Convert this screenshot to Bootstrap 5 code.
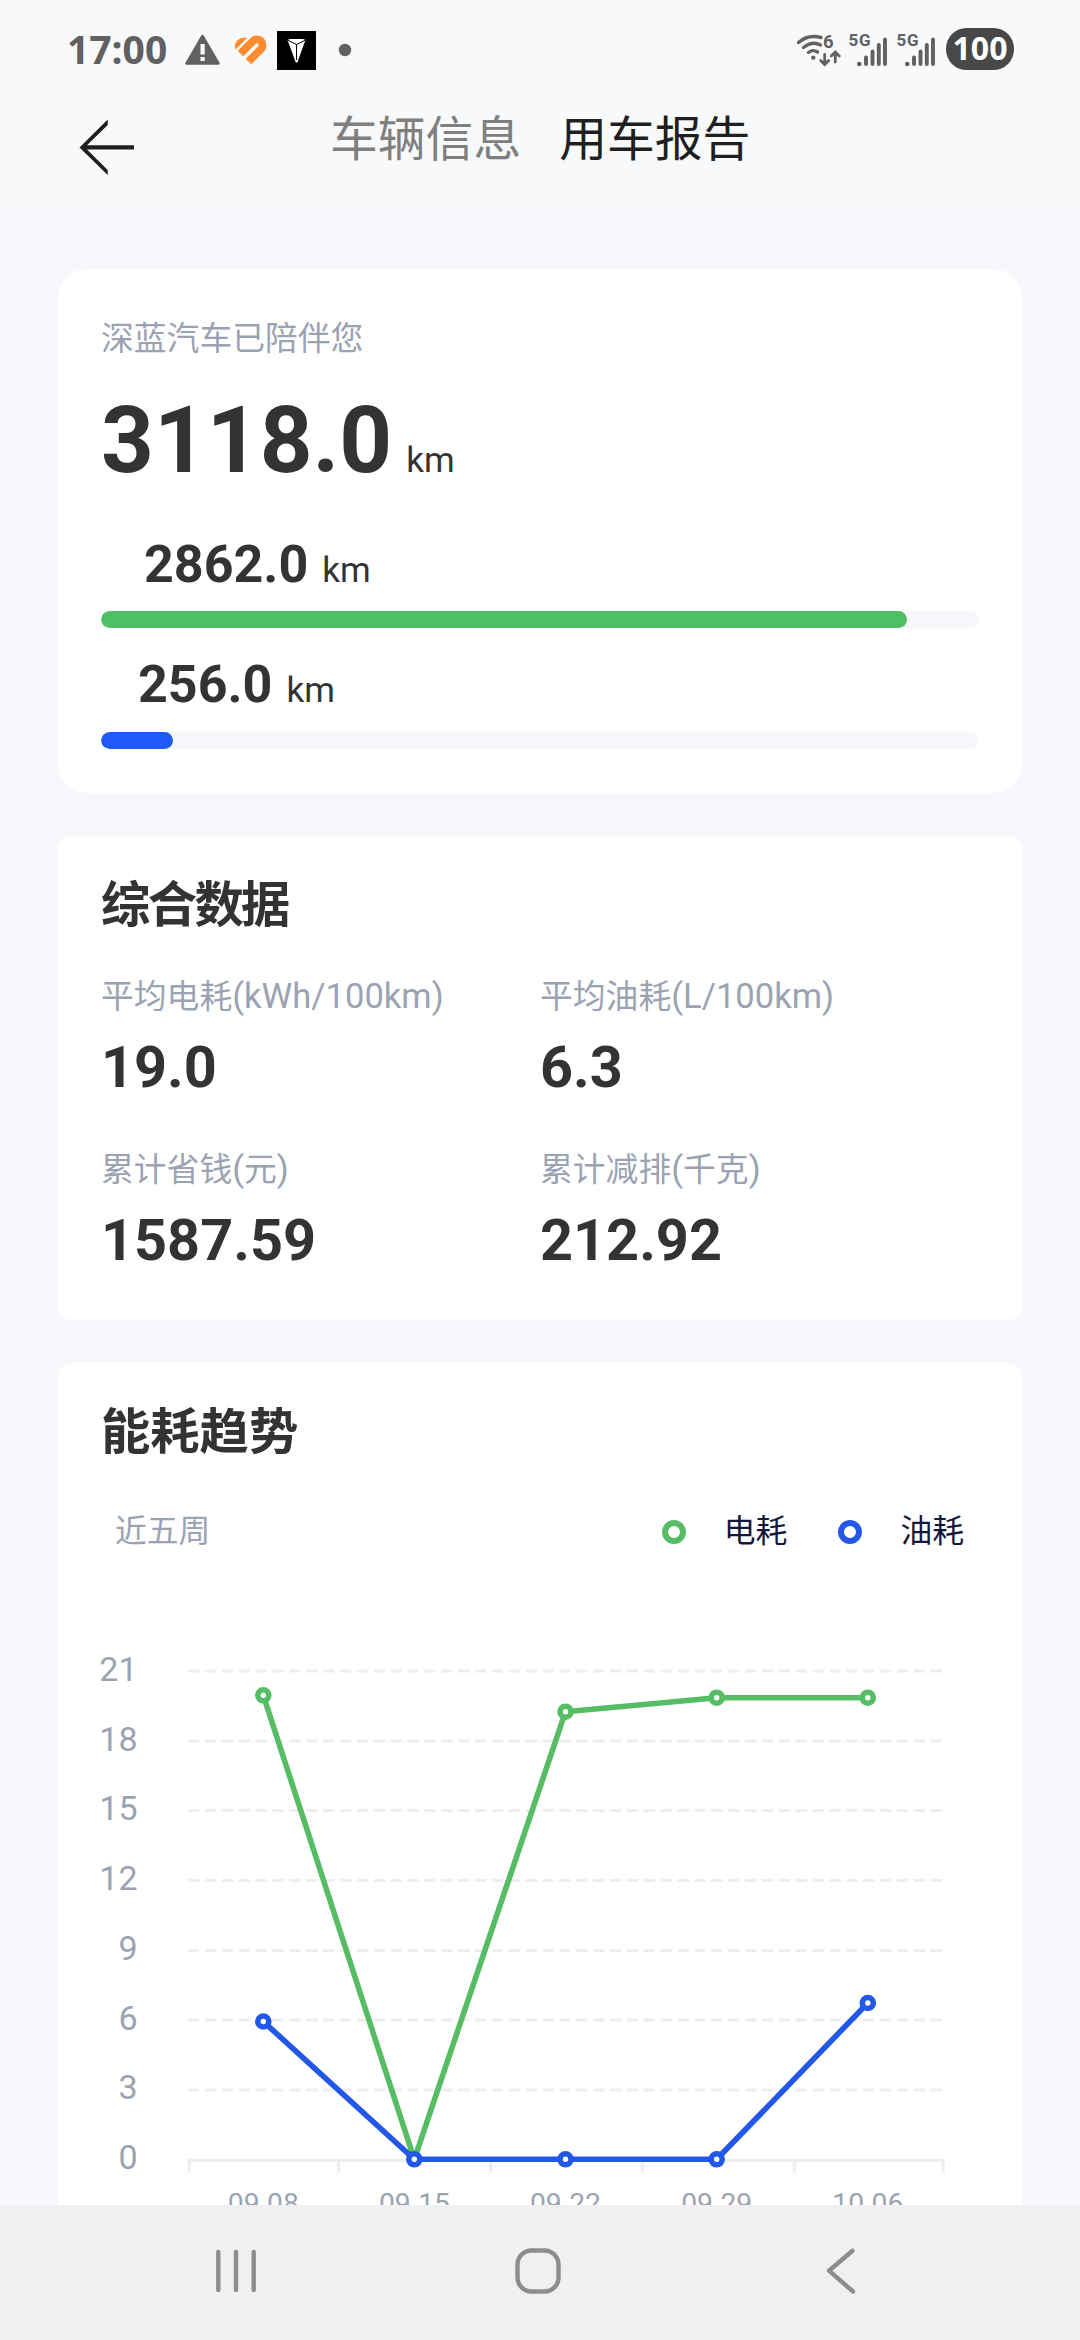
<!DOCTYPE html>
<html lang="zh-CN">
<head>
<meta charset="utf-8">
<meta name="viewport" content="width=device-width, initial-scale=1">
<title>用车报告</title>
<link href="https://cdn.jsdelivr.net/npm/bootstrap@5.3.0/dist/css/bootstrap.min.css" rel="stylesheet">
<style>
  html, body { height: 2340px; }
  body { width: 1080px; background: #f6f8fc; font-family: Roboto, "Noto Sans CJK SC", sans-serif; color: #333; overflow: hidden; }
  .status-bar { height: 100px; padding: 0 66px 0 67px; background: #f8f9fb; font-family: "Noto Sans", sans-serif; color: #616161; }
  .status-bar svg, .title-bar svg { display: block; flex: none; }
  .clock { font-size: 39px; font-weight: 700; line-height: 98px; width: 117px; }
  .title-bar { height: 111px; background: #f8f9fb; padding-left: 78px; }
  .tab-text { font-size: 47.8px; line-height: 81px; color: #7f7f7f; }
  .tab-text.active { color: #1f1f1f; }
  .tab-gap { margin-left: 38px; }
  .panel { background: #fff; border: 0; border-radius: 14.4px; padding: 0 43px; margin: 0 58px 43px; }
  .panel-lg { border-radius: 29px; margin-top: 58px; padding: 50px 43px 44px; }
  .panel-data { padding-bottom: 47px; }
  .label-text { font-size: 32.8px; line-height: 40px; color: #9ba3b3; white-space: nowrap; }
  .label-text .latin { font-size: 34.6px; line-height: 1; }
  .total { font-size: 92.2px; line-height: 101px; font-weight: 700; margin-top: 31px; }
  .sub { font-size: 52px; line-height: 60px; font-weight: 700; }
  .sub-ev { margin: 44px 0 0 43px; }
  .sub-fuel { margin: 27px 0 0 37px; }
  .unit { font-size: 35px; line-height: 1; font-weight: 400; margin-left: 14px; }
  .track { --bs-progress-height: 17px; --bs-progress-bg: #f6f8fc; --bs-progress-border-radius: 9px; margin-top: 16px; }
  .sub-fuel + .track { margin-top: 17px; }
  .track .progress-bar { border-radius: 9px; }
  .bar-ev { background: #4fbf63; }
  .bar-fuel { background: #1f5af6; }
  .heading { font-size: 49.3px; line-height: 62px; font-weight: 700; margin: 0; padding-top: 38px; box-sizing: content-box; }
  .tight { letter-spacing: -2.6px; }
  .figure-num { font-size: 57.6px; line-height: 65px; font-weight: 700; margin-top: 18px; }
  .row-one { margin-top: 41px; }
  .row-two { margin-top: 50px; }
  .panel-chart { margin-bottom: 0; padding: 0; border-radius: 14.4px 14.4px 0 0; flex: 1 1 0; min-height: 0; overflow: hidden; }
  .panel-chart .heading { padding-left: 43px; }
  .legend-row { margin-top: 48px; padding: 0 58px 0 57px; height: 39px; }
  .small-label { font-size: 31.8px; }
  .legend-text { color: #15183a; margin-left: 38px; }
  .legend-text + .legend-dot { margin-left: 51px; }
  .legend-dot { width: 24px; height: 24px; border: 6px solid; border-radius: 50%; position: relative; top: 1px; }
  .dot-ev { border-color: #56bd65; }
  .dot-fuel { border-color: #2357e7; }
  .nav-keys { height: 135px; background: #f0f0f2; flex: none; }
  .nav-keys svg, .chart { display: block; flex: none; }
  .chart text { font-family: Roboto, sans-serif; fill: #9ba3b3; }
</style>
</head>
<body class="d-flex flex-column">

<header class="flex-shrink-0">
  <div class="status-bar d-flex align-items-start">
    <span class="clock">17:00</span>
    <svg width="170" height="100" viewBox="184 0 170 100">
      <path d="M202.500 36 L218.500 63.500 H186.500Z" fill="#616161" stroke="#616161" stroke-width="2.500" stroke-linejoin="round"/>
      <path d="M200.500 44h4.200v10.500h-4.200zM200.500 57h4.200v4h-4.200z" fill="#f8f9fb"/>
      <path d="M240.500 53.500 L253 41 A5.660 5.660 0 0 1 261 49 L248.500 61.500" fill="none" stroke="#fb8b2c" stroke-width="7.800"/>
      <path d="M235.300 49.700 A9.400 9.400 0 0 1 247 38Z" fill="#fb8b2c"/>
      <rect x="277" y="31" width="39" height="39" fill="#000"/>
      <path d="M287.500 40 L290 39 H303 L305.500 40 L297.300 62.500 H295.800Z" fill="#fff"/>
      <path d="M288 40.300 L296.500 44.500 L305 40.300 M296.500 44.500 V60" fill="none" stroke="#000" stroke-width="1"/>
      <circle cx="345" cy="50" r="6.200" fill="#616161"/>
    </svg>
    <svg class="ms-auto" width="220" height="100" viewBox="794 0 220 100">
      <g fill="none" stroke="#616161" stroke-width="3.400" stroke-linecap="round">
        <path d="M798.500 42.500 Q808 34 821 37.500"/>
        <path d="M803.500 47.500 Q812 40.500 820.500 45"/>
        <path d="M808.500 52.500 Q813 49 817.500 52"/>
        <path d="M824.700 54.500V64M820.700 60.500 L824.700 64.500 L828.700 60.500M835.300 62V52.500M831.300 56 L835.300 52 L839.300 56" stroke-width="2.800"/>
      </g>
      <circle cx="813.300" cy="57.600" r="2.200" fill="#616161"/>
      <text x="823" y="48.300" font-family="Roboto" font-weight="700" font-size="18.500" fill="#616161">6</text>
      <g id="sig">
        <text x="848.500" y="46.200" font-family="Roboto" font-weight="700" font-size="17" fill="#616161" textLength="22">5G</text>
        <circle cx="859.300" cy="64" r="2.300" fill="#616161"/>
        <path d="M866 57.500V64M872.500 51.500V64M878.800 45V64M885 39.500V64" stroke="#616161" stroke-width="3.900" stroke-linecap="round"/>
      </g>
      <use href="#sig" x="48"/>
      <rect x="946" y="28" width="68" height="42" rx="20.500" fill="#484848"/>
      <text x="980" y="60" text-anchor="middle" font-family="Noto Sans" font-weight="700" font-size="33" textLength="55" lengthAdjust="spacingAndGlyphs" fill="#fff">100</text>
    </svg>
  </div>
  <nav class="title-bar d-flex align-items-start">
    <svg width="252" height="90" viewBox="78 100 252 90">
      <path d="M107.700 119.500 V125 L87 145.300 H134 V149.500 H87 L107.700 170 V175 L79.500 147.400Z" fill="#1f1f1f"/>
    </svg>
    <span class="tab-text">车辆信息</span>
    <span class="tab-text tab-gap active">用车报告</span>
  </nav>
</header>

<main class="d-flex flex-column flex-grow-1 overflow-hidden">
  <section class="card panel panel-lg flex-shrink-0">
    <div class="label-text">深蓝汽车已陪伴您</div>
    <div class="total">3118.0<span class="unit">km</span></div>
    <div class="sub sub-ev">2862.0<span class="unit">km</span></div>
    <div class="progress track"><div class="progress-bar bar-ev" style="width:91.8%"></div></div>
    <div class="sub sub-fuel">256.0<span class="unit">km</span></div>
    <div class="progress track"><div class="progress-bar bar-fuel" style="width:8.2%"></div></div>
  </section>

  <section class="card panel panel-data flex-shrink-0">
    <h2 class="heading tight">综合数据</h2>
    <div class="row g-0 row-one">
      <div class="col-6">
        <div class="label-text">平均电耗<span class="latin">(kWh/100km)</span></div>
        <div class="figure-num">19.0</div>
      </div>
      <div class="col-6">
        <div class="label-text">平均油耗<span class="latin">(L/100km)</span></div>
        <div class="figure-num">6.3</div>
      </div>
    </div>
    <div class="row g-0 row-two">
      <div class="col-6">
        <div class="label-text">累计省钱<span class="latin">(</span>元<span class="latin">)</span></div>
        <div class="figure-num">1587.59</div>
      </div>
      <div class="col-6">
        <div class="label-text">累计减排<span class="latin">(</span>千克<span class="latin">)</span></div>
        <div class="figure-num">212.92</div>
      </div>
    </div>
  </section>

  <section class="card panel panel-chart">
    <h2 class="heading">能耗趋势</h2>
    <div class="legend-row d-flex align-items-center">
      <span class="label-text small-label me-auto">近五周</span>
      <span class="legend-dot dot-ev"></span>
      <span class="label-text small-label legend-text">电耗</span>
      <span class="legend-dot dot-fuel"></span>
      <span class="label-text small-label legend-text">油耗</span>
    </div>
    <svg class="chart" width="964" height="680" viewBox="58 1550 964 680">
      <path d="M188 1671H942M188 1741H942M188 1810.500H942M188 1880.500H942M188 1950.500H942M188 2020H942M188 2090H942" stroke="#eee" stroke-width="2.900" stroke-dasharray="11.200 5.680" fill="none"/>
      <path d="M187.500 2160.400H944.500M189.300 2160V2173M338.500 2160V2173M490.500 2160V2173M642.300 2160V2173M794.300 2160V2173M943.200 2160V2173" stroke="#eee" stroke-width="2.900" fill="none"/>
      <g font-size="34" text-anchor="end">
        <text x="137.500" y="1680.500">21</text><text x="137.500" y="1750.500">18</text><text x="137.500" y="1820">15</text><text x="137.500" y="1889.500">12</text>
        <text x="137.500" y="1959.500">9</text><text x="137.500" y="2029.500">6</text><text x="137.500" y="2099">3</text><text x="137.500" y="2168.500">0</text>
      </g>
      <g font-size="28.300" text-anchor="middle">
        <text x="263.300" y="2212.500">09.08</text><text x="414.500" y="2212.500">09.15</text><text x="565.500" y="2212.500">09.22</text><text x="716.700" y="2212.500">09.29</text><text x="867.800" y="2212.500">10.06</text>
      </g>
      <g stroke="#56bd65" stroke-width="5.600" fill="none" stroke-linejoin="bevel">
        <path d="M263.300 1695.300 L414.300 2159.300 L565.500 1711.700 L716.700 1697.700 H867.800"/>
        <g fill="#fff"><circle cx="263.300" cy="1695.300" r="5.500"/><circle cx="565.500" cy="1711.700" r="5.500"/><circle cx="716.700" cy="1697.700" r="5.500"/><circle cx="867.800" cy="1697.700" r="5.500"/></g>
      </g>
      <g stroke="#2357e7" stroke-width="5.600" fill="none" stroke-linejoin="bevel">
        <path d="M263.300 2021.500 L414.300 2159.300 H716.700 L867.800 2003"/>
        <g fill="#fff"><circle cx="263.300" cy="2021.500" r="5.500"/><circle cx="414.300" cy="2159.300" r="5.500"/><circle cx="565.500" cy="2159.300" r="5.500"/><circle cx="716.700" cy="2159.300" r="5.500"/><circle cx="867.800" cy="2003" r="5.500"/></g>
      </g>
    </svg>
  </section>
</main>

<footer class="nav-keys">
  <svg width="1080" height="135" viewBox="0 2205 1080 135" fill="none" stroke="#8d8d8d" stroke-width="4.400" stroke-linecap="round" stroke-linejoin="round">
    <path d="M218.300 2252V2290M236 2252V2290M253.700 2252V2290"/>
    <rect x="517.500" y="2250.500" width="41" height="41" rx="14"/>
    <path d="M852.500 2250.800 L829 2270.700 L853 2291.500"/>
  </svg>
</footer>

<script src="https://cdn.jsdelivr.net/npm/bootstrap@5.3.0/dist/js/bootstrap.bundle.min.js"></script>
</body>
</html>
